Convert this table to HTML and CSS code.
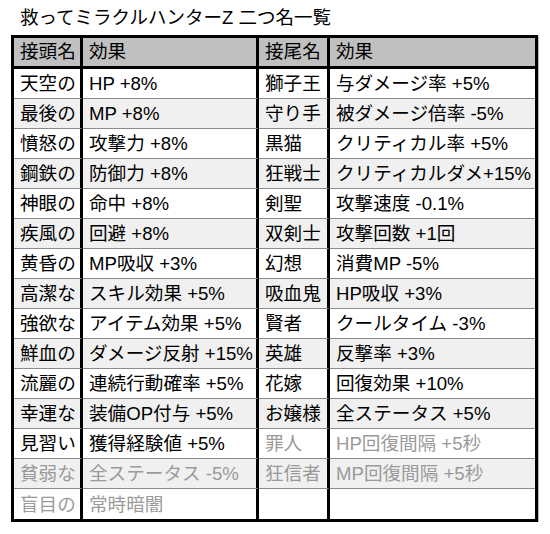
FILE: index.html
```html
<!DOCTYPE html>
<html lang="ja">
<head>
<meta charset="utf-8">
<link rel="stylesheet" href="styles.css">
</head>
<body>
<div class="page">
  <h1 class="title">救ってミラクルハンターZ 二つ名一覧</h1>
  <table class="names">
    <thead>
      <tr><th class="c1">接頭名</th><th class="c2">効果</th><th class="c3">接尾名</th><th class="c4">効果</th></tr>
    </thead>
    <tbody>
      <tr><td>天空の</td><td>HP +8%</td><td>獅子王</td><td>与ダメージ率 +5%</td></tr>
      <tr><td>最後の</td><td>MP +8%</td><td>守り手</td><td>被ダメージ倍率 -5%</td></tr>
      <tr><td>憤怒の</td><td>攻撃力 +8%</td><td>黒猫</td><td>クリティカル率 +5%</td></tr>
      <tr><td>鋼鉄の</td><td>防御力 +8%</td><td>狂戦士</td><td>クリティカルダメ+15%</td></tr>
      <tr><td>神眼の</td><td>命中 +8%</td><td>剣聖</td><td>攻撃速度 -0.1%</td></tr>
      <tr><td>疾風の</td><td>回避 +8%</td><td>双剣士</td><td>攻撃回数 +1回</td></tr>
      <tr><td>黄昏の</td><td>MP吸収 +3%</td><td>幻想</td><td>消費MP -5%</td></tr>
      <tr><td>高潔な</td><td>スキル効果 +5%</td><td>吸血鬼</td><td>HP吸収 +3%</td></tr>
      <tr><td>強欲な</td><td>アイテム効果 +5%</td><td>賢者</td><td>クールタイム -3%</td></tr>
      <tr><td>鮮血の</td><td>ダメージ反射 +15%</td><td>英雄</td><td>反撃率 +3%</td></tr>
      <tr><td>流麗の</td><td>連続行動確率 +5%</td><td>花嫁</td><td>回復効果 +10%</td></tr>
      <tr><td>幸運な</td><td>装備OP付与 +5%</td><td>お嬢様</td><td>全ステータス +5%</td></tr>
      <tr><td>見習い</td><td>獲得経験値 +5%</td><td class="dim">罪人</td><td class="dim">HP回復間隔 +5秒</td></tr>
      <tr><td class="dim">貧弱な</td><td class="dim">全ステータス -5%</td><td class="dim">狂信者</td><td class="dim">MP回復間隔 +5秒</td></tr>
      <tr><td class="dim">盲目の</td><td class="dim">常時暗闇</td><td></td><td></td></tr>
    </tbody>
  </table>
</div>
</body>
</html>
```

FILE: styles.css
```css
* { box-sizing: border-box; }
html, body { margin: 0; padding: 0; background: #fff; }
body {
  font-family: "Liberation Sans", "Noto Sans CJK JP", sans-serif;
  color: #000;
}
.page {
  padding: 6px 0 0 11px;
}
.title {
  margin: 0 0 5px 9px;
  font-size: 18.5px;
  font-weight: normal;
  line-height: 24px;
}
.names {
  border-collapse: separate;
  border-spacing: 0;
  table-layout: fixed;
  width: 527px;
  border: 3px solid #000;
  box-shadow: 1px 1px 0 #bbb;
}
.names th, .names td {
  font-size: 18.6px;
  font-weight: normal;
  text-align: left;
  white-space: nowrap;
  overflow: hidden;
  padding: 0 0 0 6px;
  border-right: 3px solid #000;
}
.names th:last-child, .names td:last-child { border-right: none; }
.names th {
  background: #c0c0c0;
  height: 31px;
  border-bottom: 3px solid #000;
  line-height: 28px;
}
.names td {
  height: 30px;
  line-height: 29px;
  border-bottom: 1px solid #8c8c8c;
}
.names tbody tr:nth-child(even) td { background: #f0f0f0; }
.names tbody tr:last-child td { border-bottom: none; height: 30px; }
.c1 { width: 69px; }
.c2 { width: 176px; }
.c3 { width: 71px; }
.c4 { width: 205px; }
.names td.dim { color: #9a9a9a; }
```
